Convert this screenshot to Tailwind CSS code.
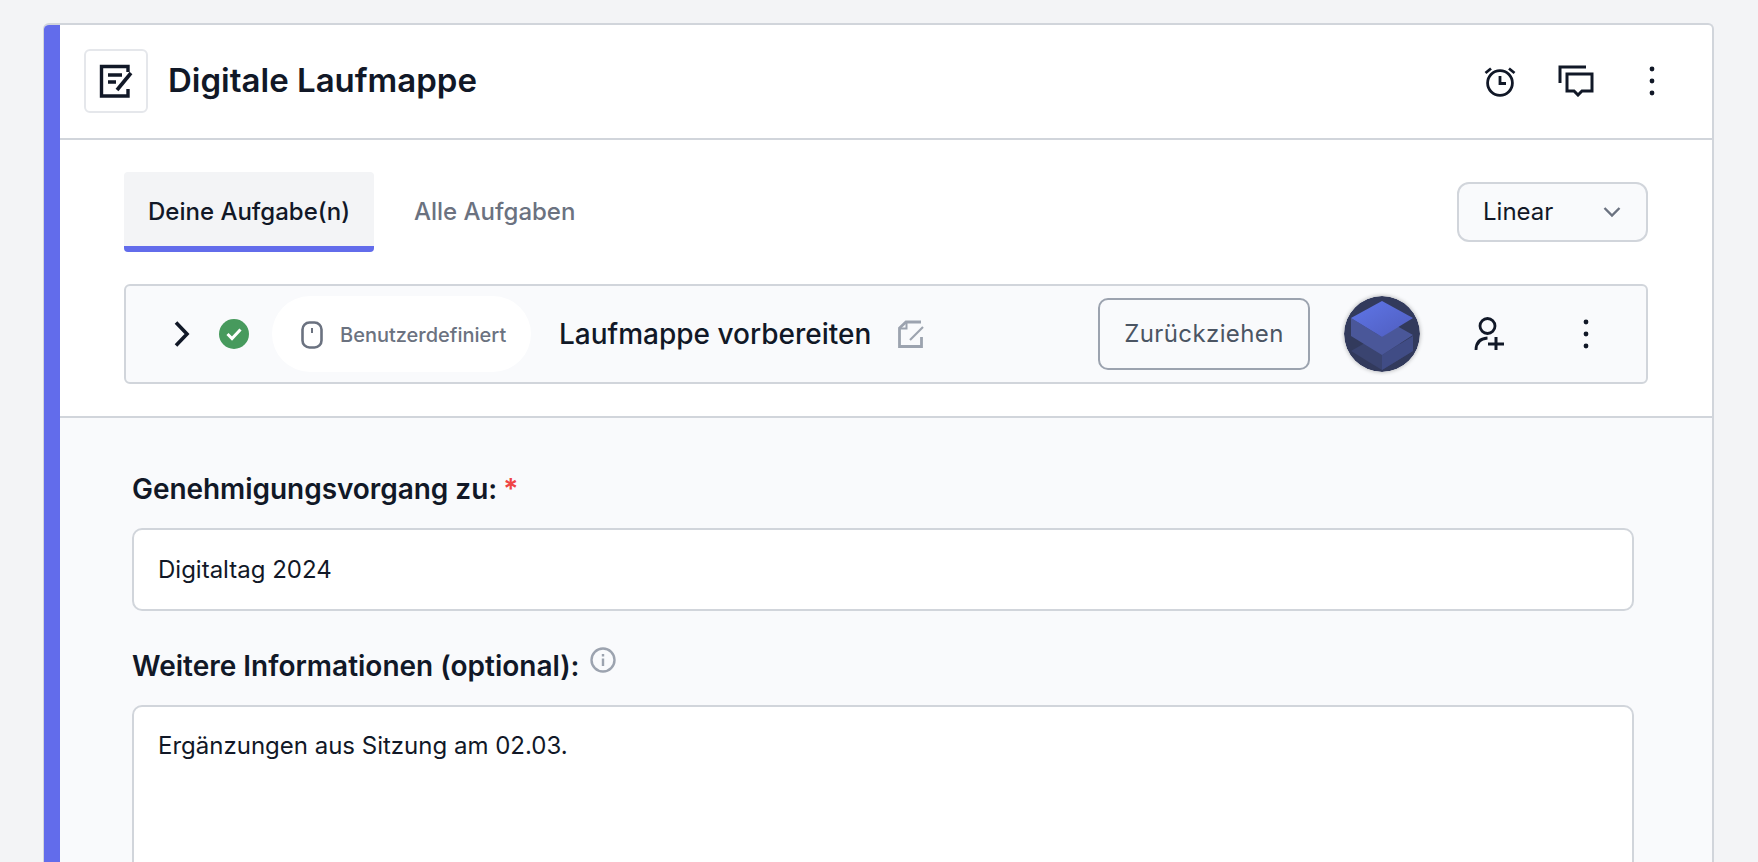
<!DOCTYPE html>
<html lang="de">
<head>
<meta charset="utf-8">
<script src="https://cdn.jsdelivr.net/npm/@tailwindcss/browser@4"></script>
</head>
<body class="bg-[#f3f4f6] h-[862px] overflow-hidden font-['Inter',sans-serif] text-[#111827]">
<div class="pt-[23px] pl-[43px] pr-[44px] h-[862px] overflow-hidden">
  <div class="relative h-[900px] bg-white rounded-[6px] pl-[16px] border-t-2 border-r-2 border-l border-[#d1d5db] overflow-hidden">
    <div class="absolute left-0 top-0 bottom-0 w-[16px] bg-[#626ceb]"></div>
    <header class="h-[115px] flex items-center pl-[24px] pr-[56px] pb-[1px] border-b-2 border-[#d1d5db]">
      <div class="w-[64px] h-[64px] rounded-[6px] border-2 border-[#e5e7eb] flex items-center justify-center">
        <svg class="w-[36px] h-[36px]" viewBox="0 0 36 36" fill="none" stroke="#111827" stroke-width="3.4"><path d="M30 9V3.5H3.5V33H30V26"/><path d="M10 12H24M10 19H18" /><path d="M19 27L33 10" stroke-width="3.6"/></svg>
      </div>
      <h1 class="ml-[20px] text-[33px] font-semibold">Digitale Laufmappe</h1>
      <div class="ml-auto flex items-center">
        <svg class="w-[32px] h-[32px]" viewBox="0 0 32 32" fill="none" stroke="#111827" stroke-width="2.8"><circle cx="16" cy="18" r="12.4"/><path d="M16 11V18.5H22M1.5 8L7 3.5M30.5 8L25 3.5"/></svg>
        <svg class="ml-[42px] w-[36px] h-[32px]" viewBox="0 0 36 32" fill="none" stroke="#111827" stroke-width="3"><path d="M28 2H2V18"/><path d="M9 9H34V26H24L20 30L16 26H9Z"/></svg>
        <svg class="ml-[54px] w-[8px] h-[30px]" viewBox="0 0 8 30" fill="#111827"><circle cx="4" cy="3" r="2.4"/><circle cx="4" cy="15" r="2.4"/><circle cx="4" cy="27" r="2.4"/></svg>
      </div>
    </header>
    <section class="h-[278px] px-[64px] border-b-2 border-[#d1d5db]">
      <div class="pt-[32px] flex items-start">
        <div class="w-[250px] h-[80px] rounded-[4px] bg-[#f3f4f6] border-b-[6px] border-[#626ceb] flex items-center justify-center text-[24px] font-medium pt-[6px]">Deine Aufgabe(n)</div>
        <div class="ml-[40px] h-[80px] flex items-center text-[24px] font-medium text-[#6b7280]">Alle Aufgaben</div>
        <div class="ml-auto mt-[10px] w-[191px] h-[60px] rounded-[12px] border-2 border-[#d1d5db] bg-[#f9fafc] flex items-center pl-[24px] pr-[25px] text-[24px]">
          Linear
          <svg class="ml-auto w-[18px] h-[12px]" viewBox="0 0 18 12" fill="none" stroke="#6b7280" stroke-width="2.4"><path d="M1.5 2L9 9.5L16.5 2"/></svg>
        </div>
      </div>
      <div class="mt-[32px] h-[100px] rounded-[6px] border-2 border-[#d1d5db] bg-[#f9fafc] flex items-center pl-[48px]">
        <svg class="w-[16px] h-[26px]" viewBox="0 0 16 26" fill="none" stroke="#111827" stroke-width="3.6"><path d="M2 1.5L13 13L2 24.5"/></svg>
        <div class="ml-[29px] w-[30px] h-[30px] rounded-full bg-[#479a5d] flex items-center justify-center">
          <svg class="w-[16px] h-[14px]" viewBox="0 0 16 14" fill="none" stroke="#fff" stroke-width="3"><path d="M1.5 7L6 11.5L14.5 2.5"/></svg>
        </div>
        <div class="ml-[23px] w-[259px] h-[76px] rounded-full bg-white flex items-center pl-[29px] pt-[2px] text-[20px] font-medium text-[#6b7280]">
          <svg class="w-[22px] h-[28px] shrink-0" viewBox="0 0 22 28" fill="none" stroke="#6b7280" stroke-width="2.6"><rect x="1.5" y="1.5" width="19" height="25" rx="7"/><path d="M11 7V12" stroke-width="2"/></svg>
          <span class="ml-[17px]">Benutzerdefiniert</span>
        </div>
        <span class="ml-[28px] text-[28px] font-medium whitespace-nowrap">Laufmappe vorbereiten</span>
        <svg class="ml-[27px] w-[26px] h-[28px]" viewBox="0 0 26 28" fill="none" stroke="#9ca3af" stroke-width="2.8"><path d="M23 2H8L1.5 8V26.5H23.5V17"/><path d="M8.5 2V8.5H1.5" stroke-width="2"/><path d="M12 20L25 7" stroke-width="2.2"/></svg>
        <div class="ml-auto flex items-center pr-[56px]">
          <div class="w-[212px] h-[72px] rounded-[10px] border-2 border-[#9ca3af] flex items-center justify-center text-[24px] text-[#4b5563] tracking-[0.4px]">Zurückziehen</div>
          <div class="ml-[34px] w-[76px] h-[76px] rounded-full shadow-[0_0_4px_rgba(0,0,0,0.3)] overflow-hidden">
            <svg class="w-[76px] h-[76px]" viewBox="0 0 76 76"><defs><linearGradient id="a" x1="0" y1="0" x2="1" y2="1"><stop offset="0" stop-color="#5f76e8"/><stop offset="1" stop-color="#4f5dbe"/></linearGradient></defs><circle cx="38" cy="38" r="38" fill="#323a5c"/><path d="M7 55L38 37L69 55L38 74Z" fill="#3a4470"/><path d="M38 59L69 40V55L38 74Z" fill="#404c85"/><path d="M7 22V40L38 59L69 39L53 30L38 41Z" fill="#4a5799"/><path d="M7 22L38 5L69 22L38 41Z" fill="url(#a)"/></svg>
          </div>
          <svg class="ml-[54px] w-[30px] h-[34px]" viewBox="0 0 30 34" fill="none" stroke="#111827" stroke-width="2.8"><circle cx="13.5" cy="9" r="7.5"/><path d="M2 33C2 26 6 21.5 13.5 21"/><path d="M14 27H30M22 20V33" stroke-width="3"/></svg>
          <svg class="ml-[78px] w-[8px] h-[30px]" viewBox="0 0 8 30" fill="#111827"><circle cx="4" cy="3" r="2.4"/><circle cx="4" cy="15" r="2.4"/><circle cx="4" cy="27" r="2.4"/></svg>
        </div>
      </div>
    </section>
    <section class="h-[500px] bg-[#f9fafc] px-[72px] pt-[53px]">
      <label class="block text-[28px] font-semibold leading-[36px] tracking-[-0.05px]">Genehmigungsvorgang zu: <span class="text-[#ef4444] -ml-[1px]">*</span></label>
      <div class="mt-[21px] w-[1502px] h-[83px] rounded-[10px] border-2 border-[#d1d5db] bg-white flex items-center pl-[24px] text-[24px]">Digitaltag 2024</div>
      <div class="mt-[37px] flex items-start">
        <label class="text-[28px] font-semibold leading-[36px]">Weitere Informationen (optional):</label>
        <svg class="ml-[10px] -mt-[1px] w-[26px] h-[26px]" viewBox="0 0 26 26" fill="none" stroke="#9ca3af" stroke-width="2.4"><circle cx="13" cy="13" r="11.5"/><path d="M13 11.5V19M13 7V9.4"/></svg>
      </div>
      <div class="mt-[21px] w-[1502px] h-[300px] rounded-[10px] border-2 border-[#d1d5db] bg-white pl-[24px] pt-[21px] text-[24px]">Ergänzungen aus Sitzung am 02.03.</div>
    </section>
  </div>
</div>
</body>
</html>
